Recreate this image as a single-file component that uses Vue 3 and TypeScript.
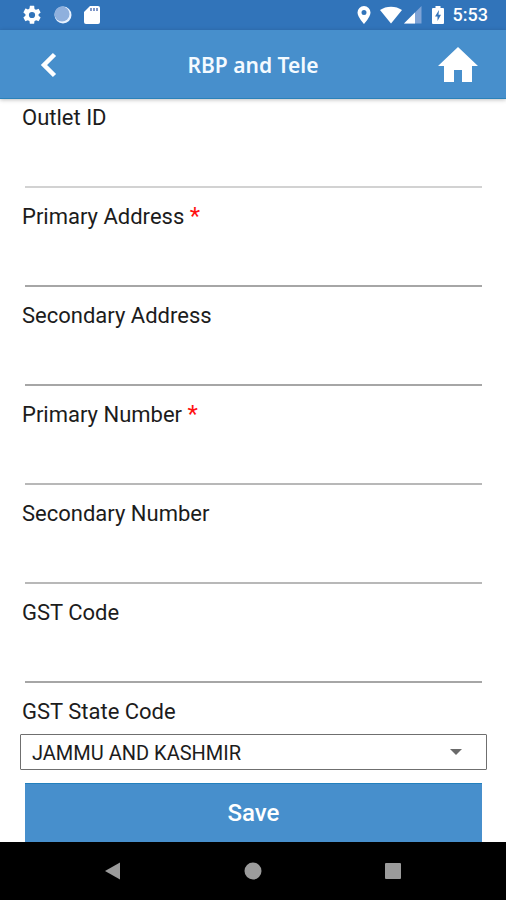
<script setup lang="ts">
import { reactive, ref } from 'vue'

interface Field {
  id: string
  label: string
  required: boolean
  tone: 'light' | 'mid' | 'dark'
}

const fields: Field[] = [
  { id: 'outlet-id', label: 'Outlet ID', required: false, tone: 'light' },
  { id: 'primary-address', label: 'Primary Address', required: true, tone: 'dark' },
  { id: 'secondary-address', label: 'Secondary Address', required: false, tone: 'dark' },
  { id: 'primary-number', label: 'Primary Number', required: true, tone: 'mid' },
  { id: 'secondary-number', label: 'Secondary Number', required: false, tone: 'mid' },
  { id: 'gst-code', label: 'GST Code', required: false, tone: 'dark' },
]

const values = reactive<Record<string, string>>({})
const stateCode = ref('JAMMU AND KASHMIR')
</script>

<template>
  <div class="screen">
    <div class="status">
      <div class="group left">
        <svg width="22" height="22" viewBox="0 0 24 24" fill="#fff" aria-hidden="true">
          <path d="M19.14 12.94c.04-.3.06-.61.06-.94s-.02-.64-.07-.94l2.03-1.58a.49.49 0 0 0 .12-.61l-1.92-3.32a.49.49 0 0 0-.59-.22l-2.39.96a7 7 0 0 0-1.62-.94l-.36-2.54A.48.48 0 0 0 13.92 2h-3.84c-.24 0-.43.17-.47.41l-.36 2.54c-.59.24-1.13.57-1.62.94l-2.39-.96a.48.48 0 0 0-.59.22L2.74 8.87a.47.47 0 0 0 .12.61l2.03 1.58c-.05.3-.09.63-.09.94s.02.64.07.94l-2.03 1.58a.49.49 0 0 0-.12.61l1.92 3.32c.12.22.37.29.59.22l2.39-.96c.5.38 1.03.7 1.62.94l.36 2.54c.05.24.24.41.48.41h3.84c.24 0 .44-.17.47-.41l.36-2.54a6.8 6.8 0 0 0 1.62-.94l2.39.96c.22.08.47 0 .59-.22l1.92-3.32a.47.47 0 0 0-.12-.61zM12 15.4a3.4 3.4 0 1 1 0-6.8 3.4 3.4 0 0 1 0 6.8z" />
        </svg>
        <svg width="18" height="18" viewBox="0 0 18 18" aria-hidden="true">
          <circle cx="9" cy="9" r="8.5" fill="#e8f2ff" />
          <circle cx="8" cy="8" r="7.5" fill="#8fb0dd" />
        </svg>
        <svg width="18" height="20" viewBox="0 0 18 20" aria-hidden="true">
          <path d="M7 1h8a2 2 0 0 1 2 2v14a2 2 0 0 1-2 2H3a2 2 0 0 1-2-2V7z" fill="#fff" />
          <path d="M7 3h2v3H7zM10 3h2v3h-2zM13 3h2v3h-2z" fill="#7f97c8" />
        </svg>
      </div>
      <div class="group right">
        <svg class="pin" width="14" height="20" viewBox="0 0 14 20" aria-hidden="true">
          <path d="M7 1a6.5 6.5 0 0 0-6.500 6.500C.5 12 7 19 7 19s6.500-7 6.500-11.500A6.500 6.500 0 0 0 7 1zm0 9a2.500 2.500 0 1 1 0-5 2.500 2.500 0 0 1 0 5z" fill="#fff" />
        </svg>
        <svg class="wifi" width="22" height="18" viewBox="0 0 22 18" aria-hidden="true">
          <path d="M0 4C6-.5 16-.5 22 4L11 17.500z" fill="#fff" />
        </svg>
        <svg class="cell" width="18" height="18" viewBox="0 0 18 18" aria-hidden="true">
          <path d="M0 17.500 17.500 0v17.500z" fill="#7fa3d6" />
          <path d="M0 17.500 11 6.500v11z" fill="#fff" />
        </svg>
        <svg class="battery" width="12" height="20" viewBox="0 0 12 20" aria-hidden="true">
          <path d="M3.500 1h5v2H11a1 1 0 0 1 1 1v14a1 1 0 0 1-1 1H1a1 1 0 0 1-1-1V4a1 1 0 0 1 1-1h2.500z" fill="#fff" />
          <path d="M7 5 3 11.500h2.500V16L9 9.800H6.500z" fill="#3574ba" />
        </svg>
        <span class="time">5:53</span>
      </div>
    </div>

    <header class="bar">
      <button class="icon-button" type="button" aria-label="Back">
        <svg width="18" height="26" viewBox="0 0 18 26" aria-hidden="true">
          <path d="M15.500 2.500 5 13l10.500 10.500" fill="none" stroke="#fff" stroke-width="4.500" />
        </svg>
      </button>
      <h1>RBP and Tele</h1>
      <button class="icon-button" type="button" aria-label="Home">
        <svg width="42" height="36" viewBox="0 0 42 36" aria-hidden="true">
          <path d="M21 0 41 19h-6v16H25V23h-8v12H7V19H1z" fill="#fff" />
        </svg>
      </button>
    </header>

    <form class="form" @submit.prevent>
      <div v-for="f in fields" :key="f.id" class="field">
        <label :for="f.id">{{ f.label }} <span v-if="f.required" class="star">*</span></label>
        <input :id="f.id" v-model="values[f.id]" type="text" :class="f.tone" :required="f.required" />
      </div>
      <div class="state">
        <label for="gst-state">GST State Code</label>
        <div class="select">
          <select id="gst-state" v-model="stateCode">
            <option>JAMMU AND KASHMIR</option>
          </select>
          <svg width="12" height="6" viewBox="0 0 12 6" aria-hidden="true">
            <path d="M0 0h12L6 6z" fill="#6a6a6a" />
          </svg>
        </div>
      </div>
      <button class="save" type="submit">Save</button>
    </form>

    <nav class="nav">
      <button class="icon-button" type="button" aria-label="System back">
        <svg width="18" height="18" viewBox="0 0 18 18" aria-hidden="true"><path d="M1 9 16 .5v17z" fill="#9b9b9b" /></svg>
      </button>
      <button class="icon-button" type="button" aria-label="System home">
        <svg width="18" height="18" viewBox="0 0 18 18" aria-hidden="true"><circle cx="9" cy="9" r="8.500" fill="#9b9b9b" /></svg>
      </button>
      <button class="icon-button" type="button" aria-label="Recent apps">
        <svg width="18" height="18" viewBox="0 0 18 18" aria-hidden="true"><rect x="1" y="1" width="16" height="16" rx="1" fill="#9b9b9b" /></svg>
      </button>
    </nav>
  </div>
</template>

<style>
body {
  margin: 0;
  background: #fff;
}
</style>

<style scoped>
.screen {
  display: flex;
  flex-direction: column;
  height: 100vh;
  overflow: hidden;
  font-family: Roboto, "Liberation Sans", sans-serif;
  color: #1c1c1c;
}
.status {
  flex: none;
  display: flex;
  justify-content: space-between;
  align-items: center;
  height: 30px;
  padding: 0 18px 0 21px;
  background: #3174ba;
}
.group {
  display: flex;
  align-items: center;
}
.left {
  gap: 11px;
}
.pin {
  margin-right: 9px;
}
.wifi {
  margin-right: 2px;
}
.cell {
  margin-right: 10px;
}
.battery {
  margin-right: 9px;
}
.time {
  font-size: 18px;
  font-weight: 500;
  line-height: 30px;
  color: #fff;
}
.bar {
  flex: none;
  display: grid;
  grid-template-columns: 42px 1fr 42px;
  align-items: center;
  height: 69px;
  padding: 1px 27px 0;
  box-sizing: border-box;
  background: #478fcc;
  border-bottom: 1px solid #2b82b9;
  box-shadow: 0 1px 4px rgba(0, 0, 0, 0.25);
  z-index: 1;
}
.icon-button {
  display: flex;
  justify-content: center;
  align-items: center;
  padding: 0;
  border: 0;
  background: none;
}
h1 {
  margin: 0;
  font-family: "Noto Sans", "Open Sans", sans-serif;
  font-size: 21px;
  font-weight: 600;
  line-height: 30px;
  text-align: center;
  color: #f4faff;
}
.form {
  flex: 1;
  min-height: 0;
  overflow: hidden;
  display: flex;
  flex-direction: column;
  padding: 5px 19px 0 20px;
}
.field {
  flex: none;
  display: flex;
  flex-direction: column;
  height: 84px;
  margin-bottom: 15px;
}
label {
  padding-left: 2px;
  font-size: 22px;
  line-height: 28px;
}
.star {
  font-size: 24px;
  line-height: 20px;
  color: #ff1010;
}
input {
  flex: 1;
  min-width: 0;
  margin: 0 5px;
  padding: 0;
  border: 0;
  border-bottom: 2px solid #a6a6a6;
  background: none;
  font: inherit;
  font-size: 20px;
  outline: none;
}
input.light {
  border-color: #d2d2d2;
}
input.mid {
  border-color: #b8b8b8;
}
.state {
  flex: none;
  display: flex;
  flex-direction: column;
  gap: 8px;
}
.select {
  display: grid;
  align-items: center;
}
.select > * {
  grid-area: 1 / 1;
}
.select svg {
  justify-self: end;
  margin-right: 25px;
  pointer-events: none;
}
select {
  appearance: none;
  width: 100%;
  height: 36px;
  padding: 1px 40px 0 11px;
  border: 1px solid #6f6f6f;
  border-radius: 1px;
  background: #fff;
  color: inherit;
  font: inherit;
  font-size: 20px;
}
.save {
  flex: none;
  height: 60px;
  margin: 13px 5px 0;
  padding: 0 0 1px;
  border: 0;
  border-top: 1px solid #2380bd;
  background: #478fcc;
  color: #fff;
  font: inherit;
  font-size: 24px;
  font-weight: 500;
}
.nav {
  flex: none;
  display: flex;
  justify-content: center;
  gap: 122px;
  height: 58px;
  background: #000;
}
</style>
